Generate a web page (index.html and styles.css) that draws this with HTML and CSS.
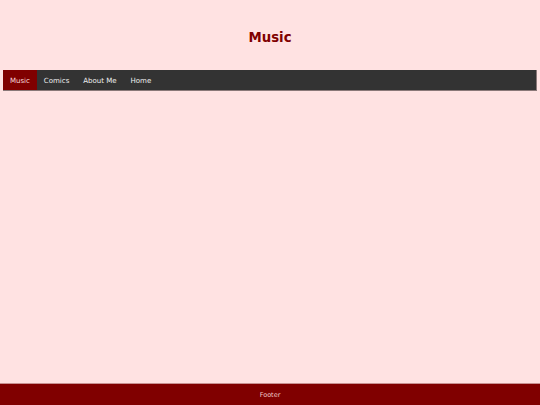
FILE: index.html
```html
<!DOCTYPE html>
<html>
<head>
<meta charset="utf-8">
<link rel="stylesheet" href="styles.css">
</head>
<body>
<div class="page">
  <header class="header">
    <h1 class="title">Music</h1>
  </header>
  <nav class="nav">
    <a class="nav-item active" href="#">Music</a>
    <a class="nav-item" href="#">Comics</a>
    <a class="nav-item" href="#">About Me</a>
    <a class="nav-item" href="#">Home</a>
  </nav>
  <main class="content"></main>
  <footer class="footer">Footer</footer>
</div>
</body>
</html>
```
FILE: styles.css
```css
html, body {
  margin: 0;
  padding: 0;
  height: 100%;
}
body {
  background: #ffe2e2;
  font-family: "DejaVu Sans", Verdana, sans-serif;
}
.page {
  display: flex;
  flex-direction: column;
  min-height: 100vh;
}
.header {
  height: 70px;
  display: flex;
  align-items: center;
  justify-content: center;
}
.title {
  margin: 0;
  font-size: 13.3px;
  font-weight: bold;
  color: #800000;
  line-height: 1;
  padding-top: 5px;
}
.nav {
  margin: 0 3px;
  height: 20px;
  background: #333333;
  display: flex;
  border-right: 1px solid #8a7878;
  border-bottom: 1px solid #8a7878;
}
.nav-item {
  display: flex;
  align-items: center;
  padding: 1px 6.9px 0;
  font-size: 7.05px;
  color: #eeeeee;
  text-decoration: none;
}
.nav-item.active {
  background: #800000;
  color: #f6d6d6;
}
.content {
  flex: 1;
}
.footer {
  height: 21px;
  background: #800000;
  border-top: 1px solid #c89090;
  color: #f2caca;
  font-size: 6.5px;
  display: flex;
  align-items: center;
  justify-content: center;
}
```
